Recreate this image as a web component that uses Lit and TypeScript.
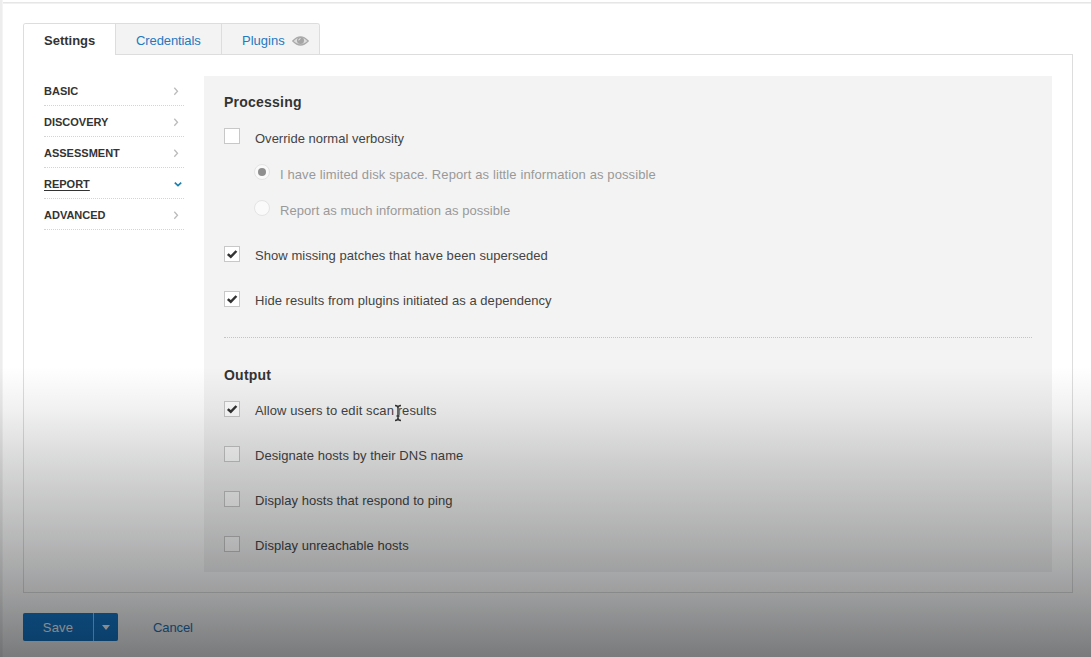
import { LitElement, html, css, svg } from "lit";
import { customElement } from "lit/decorators.js";
import { classMap } from "lit/directives/class-map.js";

const SECTIONS = ["BASIC", "DISCOVERY", "ASSESSMENT", "REPORT", "ADVANCED"];
const ACTIVE = "REPORT";

@customElement("option-check")
class OptionCheck extends LitElement {
  static properties = { checked: { type: Boolean }, label: {} };
  declare checked: boolean;
  declare label: string;
  static styles = css`
    :host { display: flex; height: 17px; letter-spacing: var(--track, 0.05px); }
    .box { box-sizing: border-box; width: 16px; height: 16px; background: #fff; border: 1px solid #c8c8c8; margin-right: 15px; flex: none; }
    svg { display: block; width: 14px; height: 14px; }
    .label { line-height: 18px; white-space: nowrap; padding-top: var(--drop, 1px); }
  `;
  render() {
    return html`<span class="box">${this.checked
      ? html`<svg viewBox="0 0 14 14">${svg`<path d="M2.8 7.1 5.8 9.8 11.4 4" fill="none" stroke="#333" stroke-width="2.5"/>`}</svg>`
      : ""}</span><span class="label">${this.label}</span>`;
  }
}

@customElement("app-root")
class AppRoot extends LitElement {
  static styles = css`
    :host { display: block; font: 13px/18px "Liberation Sans", Arial, sans-serif; letter-spacing: 0.05px; color: #444; }
    * { box-sizing: border-box; }
    .page { position: relative; height: 657px; overflow: hidden; background: linear-gradient(90deg, #ededed 2px, #f4f4f4 2px 3px, #fff 3px); padding: 23px 18px 0 23px; }
    .page::before { content: ""; position: absolute; top: 2px; left: 3px; right: 0; height: 2px; background: linear-gradient(#e6e6e6 50%, #f1f1f1 50%); }
    .tabs { display: flex; width: 297px; height: 32px; border: 1px solid #ddd; border-bottom: 0; border-radius: 3px 3px 0 0; position: relative; margin-bottom: -1px; overflow: hidden; }
    .tab { display: flex; align-items: center; flex: none; background: #f3f3f3; color: #2479bf; border-left: 1px solid #ddd; border-bottom: 1px solid #ddd; padding: 3px 0 0 20px; height: 31px; }
    .tab.on { width: 91px; background: #fff; color: #333; font-weight: bold; border-left: 0; border-bottom-color: #fff; letter-spacing: 0; }
    .cred { width: 106px; letter-spacing: -0.1px; }
    .plug { width: 98px; letter-spacing: 0; }
    .eye { width: 17px; height: 12px; margin-left: 7px; }
    .card { display: flex; height: 539px; width: 1050px; border: 1px solid #ddd; padding: 21px 20px 0; }
    .side { width: 140px; margin-right: 20px; flex: none; }
    .item { display: flex; justify-content: space-between; align-items: center; height: 31px; padding-top: 2px; border-bottom: 1px dotted #d4d4d4; font-size: 11px; font-weight: bold; letter-spacing: 0; color: #333; }
    .side .item:first-child { height: 30px; padding-top: 0; }
    .item.on .name { text-decoration: underline; text-underline-offset: 2px; }
    .chev { width: 10px; height: 10px; margin-right: 3px; }
    .item.on .chev { margin-right: 1px; }
    .panel { width: 848px; height: 496px; background: #f3f3f3; padding: 16px 20px 0; display: flex; flex-direction: column; }
    h2 { margin: 0; font-size: 14px; line-height: 20px; letter-spacing: 0.22px; color: #333; }
    .first { margin-top: 16px; --drop: 2px; --track: 0.01px; }
    .edit { margin-top: 16px; --track: 0.1px; }
    .radio { display: flex; margin: 19px 0 0 30px; height: 17px; color: #999; }
    .radio.long { letter-spacing: 0.11px; }
    .radio .text { padding-top: 2px; }
    .dot { width: 16px; height: 16px; margin-right: 10px; border: 1px solid #e4e4e4; border-radius: 50%; background: #fafafa; display: grid; place-items: center; }
    .dot.sel::after { content: ""; width: 8px; height: 8px; border-radius: 50%; background: #8f8f8f; }
    .gap { margin-top: 28px; }
    .gap.wide { margin-top: 29px; }
    .rule { border-top: 1px dotted #c4c4c4; margin: 29px 0 27px; }
    .foot { display: flex; align-items: center; margin-top: 20px; }
    .btn { display: flex; height: 28px; border-radius: 2px; overflow: hidden; color: #fff; background: #a9c9e4; }
    .save { width: 70px; background: #147ace; display: grid; place-items: center; padding-top: 2px; margin-right: 1px; letter-spacing: .2px; }
    .drop { width: 24px; background: #147ace; display: grid; place-items: center; }
    .drop::after { content: ""; border: 4px solid transparent; border-top: 5px solid #fff; border-bottom: 0; }
    .cancel { color: #1d75bb; margin-left: 35px; padding-top: 2px; letter-spacing: -0.1px; }
    .shade { position: absolute; left: 0; right: 0; top: 367px; bottom: 0; pointer-events: none;
      background: linear-gradient(rgba(2,4,6,0), rgba(2,4,6,.06) 15%, rgba(2,4,6,.16) 34%, rgba(2,4,6,.29) 60%, rgba(2,4,6,.39) 78%, rgba(2,4,6,.53)); }
    .beam { position: absolute; left: 393px; top: 404px; width: 10px; height: 18px; }
  `;
  render() {
    return html`<div class="page">
      <div class="tabs">
        <div class="tab on">Settings</div>
        <div class="tab cred">Credentials</div>
        <div class="tab plug">Plugins
          <svg class="eye" viewBox="0 0 17 12"><path d="M.8 6Q8.5-2.4 16.2 6 8.5 14 .8 6Z" fill="#ddd" stroke="#aaa" stroke-width="1.3"/><circle cx="8.5" cy="5.6" r="3.5" fill="#a5a5a5"/><path d="M6.8 5.4a1.8 1.8 0 0 1 1.8-1.8" fill="none" stroke="#eee"/></svg>
        </div>
      </div>
      <div class="card">
        <div class="side">${SECTIONS.map((s) => {
          const on = s === ACTIVE;
          return html`<div class=${classMap({ item: true, on })}><span class="name">${s}</span>
            <svg class="chev" viewBox="0 0 10 10" fill="none">${on
              ? svg`<path d="M1.8 3.6 5 6.6 8.2 3.6" stroke="#1c80ac" stroke-width="1.7"/>`
              : svg`<path d="M3.3 1.8 6.5 5.3 3.3 8.8" stroke="#bbb" stroke-width="1.3"/>`}</svg></div>`;
        })}</div>
        <div class="panel">
          <h2>Processing</h2>
          <option-check class="first" label="Override normal verbosity"></option-check>
          <div class="radio long"><span class="dot sel"></span><span class="text">I have limited disk space. Report as little information as possible</span></div>
          <div class="radio"><span class="dot"></span><span class="text">Report as much information as possible</span></div>
          <option-check class="gap wide" checked label="Show missing patches that have been superseded"></option-check>
          <option-check class="gap" checked label="Hide results from plugins initiated as a dependency"></option-check>
          <div class="rule"></div>
          <h2>Output</h2>
          <option-check class="edit" checked label="Allow users to edit scan results"></option-check>
          <option-check class="gap" label="Designate hosts by their DNS name"></option-check>
          <option-check class="gap" label="Display hosts that respond to ping"></option-check>
          <option-check class="gap" label="Display unreachable hosts"></option-check>
        </div>
      </div>
      <div class="foot">
        <div class="btn"><span class="save">Save</span><span class="drop"></span></div>
        <span class="cancel">Cancel</span>
      </div>
      <div class="shade"></div>
      <svg class="beam" viewBox="0 0 10 18" fill="none"><path d="M2 1.5Q5 1.5 5 4 5 1.5 8 1.5M5 3V15M2 16.5Q5 16.5 5 14 5 16.5 8 16.5M3.5 12H6.5" stroke="#ddd" stroke-width="2.4"/><path d="M2 1.5Q5 1.5 5 4 5 1.5 8 1.5M5 3V15M2 16.5Q5 16.5 5 14 5 16.5 8 16.5M3.5 12H6.5" stroke="#333" stroke-width="1.4"/></svg>
    </div>`;
  }
}
